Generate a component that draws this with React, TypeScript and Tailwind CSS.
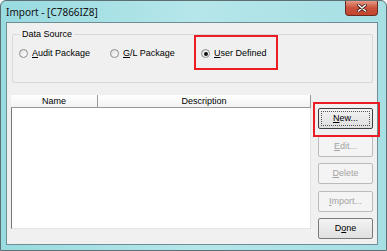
import { ReactNode } from 'react'

const ui = "font-['Liberation_Sans',Arial,sans-serif] text-[9px] leading-[11px] text-black"

function Radio({ label, hot, checked }: { label: string; hot: number; checked?: boolean }) {
  return (
    <div className="flex items-center gap-[4px]">
      <div className="w-[9px] h-[9px] rounded-full border border-[#8b8b8b] bg-gradient-to-br from-[#e0e0e0] to-white flex items-center justify-center">
        {checked && <div className="w-[4px] h-[4px] rounded-full bg-[#111]" />}
      </div>
      <span>
        {label.slice(0, hot)}
        <span className="underline">{label[hot]}</span>
        {label.slice(hot + 1)}
      </span>
    </div>
  )
}

function Btn({ children, disabled, focus }: { children: ReactNode; disabled?: boolean; focus?: boolean }) {
  return (
    <div
      className={
        'h-[21px] rounded-[2px] border flex items-center justify-center p-[2px] ' +
        (disabled
          ? 'border-[#b8bcbf] bg-[#f4f4f4] text-[#a3a3a3]'
          : focus
            ? 'border-[#3e3e3e] bg-gradient-to-b from-[#f3f3f3] to-[#dedede]'
            : 'border-[#7a7a7a] bg-gradient-to-b from-[#f3f3f3] to-[#e0e0e0]')
      }
    >
      <div className={'w-full h-full flex items-center justify-center ' + (focus ? 'border border-dotted border-[#555]' : '')}>
        {children}
      </div>
    </div>
  )
}

export default function App() {
  return (
    <div className="relative w-[387px] h-[251px] border border-[#5d6f73] rounded-t-[6px] overflow-hidden bg-gradient-to-r from-[#98dbe0] via-[#b5e6ea] to-[#a6dfe4] flex flex-col">
      <div className="h-[21px] flex items-start">
        <div className="pl-[5px] pt-[4px] font-['Noto_Sans',sans-serif] text-[10px] leading-[14px] text-[#111]">
          Import - [C7866IZ8]
        </div>
        <div className="ml-auto mr-[8px] w-[33px] h-[15px] rounded-b-[4px] border border-t-0 border-[#6b2a20] bg-gradient-to-b from-[#e49a86] via-[#c9503a] to-[#c4472f] flex items-center justify-center">
          <svg width="10" height="8" viewBox="0 0 10 8">
            <path d="M1.5 1 L8.5 7 M8.5 1 L1.5 7" stroke="#3a1a14" strokeWidth="3" strokeLinecap="round" />
            <path d="M1.5 1 L8.5 7 M8.5 1 L1.5 7" stroke="#fff" strokeWidth="1.6" strokeLinecap="round" />
          </svg>
        </div>
      </div>

      <div className={'ml-[5px] mr-[8px] h-[223px] border border-[#6f8e93] bg-[#f0f0f0] flex flex-col ' + ui}>
        <fieldset className="ml-[5px] mr-[4px] mt-[6px] h-[54px] border border-[#d5d9dc] rounded-[2px] px-[6px]">
          <legend className="ml-[1px] px-[2px]">Data Source</legend>
          <div className="flex items-center pt-[8px]">
            <div className="w-[91px]">
              <Radio label="Audit Package" hot={0} />
            </div>
            <div className="w-[91px]">
              <Radio label="G/L Package" hot={0} />
            </div>
            <Radio label="User Defined" hot={0} checked />
          </div>
        </fieldset>

        <div className="flex mt-[12px] ml-[4px] gap-[7px]">
          <div className="w-[300px] h-[134px] flex flex-col bg-white">
            <div className="h-[13px] flex bg-gradient-to-b from-white to-[#f1f2f3] border-b border-[#9a9a9a] border-r">
              <div className="w-[87px] border-r border-[#9a9a9a] flex items-center justify-center">Name</div>
              <div className="flex-1 flex items-center justify-center">Description</div>
            </div>
            <div className="flex-1 border-l border-[#777] border-b border-b-[#e4e4e4] border-r border-r-[#e4e4e4]" />
          </div>
          <div className="w-[55px] flex flex-col pt-[13px] gap-[6.5px]">
            <Btn focus>
              <span>
                <span className="underline">N</span>ew...
              </span>
            </Btn>
            <Btn disabled>
              <span>
                <span className="underline">E</span>dit...
              </span>
            </Btn>
            <Btn disabled>
              <span>
                <span className="underline">D</span>elete
              </span>
            </Btn>
            <Btn disabled>
              <span>
                <span className="underline">I</span>mport...
              </span>
            </Btn>
            <Btn>
              <span>
                D<span className="underline">o</span>ne
              </span>
            </Btn>
          </div>
        </div>
      </div>

      <div className="absolute left-[193px] top-[34px] w-[84px] h-[35px] border-2 border-[#ec1c24]" />
      <div className="absolute left-[312px] top-[101px] w-[67px] h-[35px] border-2 border-[#ec1c24]" />
    </div>
  )
}
